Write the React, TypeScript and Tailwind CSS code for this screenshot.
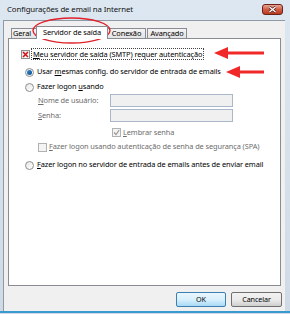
import React from "react";

const font = { fontFamily: '"Noto Sans", "Open Sans", sans-serif' };

function Radio({ checked }: { checked?: boolean }) {
  return (
    <span className="flex h-[9px] w-[9px] shrink-0 items-center justify-center rounded-full border border-[#8e8f8f] bg-gradient-to-br from-[#e6e6e6] to-[#ffffff]">
      {checked && <span className="h-[5px] w-[5px] rounded-full bg-gradient-to-br from-[#2f8ed8] to-[#0b4c8c]" />}
    </span>
  );
}

function Check({ state, disabled }: { state?: "x" | "v"; disabled?: boolean }) {
  return (
    <span
      className={`flex h-[9px] w-[9px] shrink-0 items-center justify-center border ${
        disabled ? "border-[#b1b1b1] bg-[#f4f4f4]" : "border-[#8e8f8f] bg-gradient-to-br from-[#e2e2e2] to-white"
      }`}
    >
      {state === "x" && (
        <svg width="7" height="7" viewBox="0 0 7 7">
          <path d="M1 1L6 6M6 1L1 6" stroke="#d4141b" strokeWidth="1.6" />
        </svg>
      )}
      {state === "v" && (
        <svg width="7" height="7" viewBox="0 0 7 7">
          <path d="M1 3.5L3 5.5L6.2 1" stroke="#9a9a9a" strokeWidth="1.2" fill="none" />
        </svg>
      )}
    </span>
  );
}

function Tab({ label, active, className }: { label: string; active?: boolean; className?: string }) {
  return (
    <div
      className={`flex items-center border border-b-0 border-[#898c95] ${
        active
          ? "relative z-10 -mb-px h-[13px] bg-white"
          : "h-[10px] bg-gradient-to-b from-[#f4f4f4] to-[#e3e3e3]"
      } ${className ?? ""}`}
    >
      <span className="whitespace-nowrap leading-none">{label}</span>
    </div>
  );
}

export default function App() {
  return (
    <div
      className="relative h-[314px] w-[290px] overflow-hidden bg-gradient-to-b from-[#dde7f1] to-[#cfdae6] text-[7.4px] tracking-[-0.1px] text-black"
      style={font}
    >
      {/* title bar */}
      <div className="flex h-[20px] items-center justify-between pl-[7px] pr-[7px]">
        <span className="whitespace-nowrap text-[7.8px] leading-none text-[#111]">
          Configurações de email na Internet
        </span>
        <div className="mb-[2px] flex h-[11px] w-[21px] items-center justify-center rounded-[3px] border border-[#6b2318] bg-gradient-to-b from-[#e6a595] via-[#d35b45] to-[#b83a22]">
          <svg width="9" height="7" viewBox="0 0 9 7">
            <path d="M1.5 1L7.5 6M7.5 1L1.5 6" stroke="#4a1a12" strokeWidth="2.6" />
            <path d="M1.5 1L7.5 6M7.5 1L1.5 6" stroke="#ffffff" strokeWidth="1.4" />
          </svg>
        </div>
      </div>

      {/* client area */}
      <div className="ml-[3px] mr-[5px] flex h-[291px] flex-col border-l border-t border-[#8f9aa6] bg-[#f0f0f0]">
        {/* tabs */}
        <div className="ml-[7px] mt-[5px] flex h-[12px] items-end">
          <Tab label="Geral" className="w-[26px] justify-start pl-px" />
          <Tab label="Servidor de saída" active className="-ml-px w-[72px] justify-center" />
          <Tab label="Conexão" className="-ml-px w-[39px] justify-center" />
          <Tab label="Avançado" className="ml-px w-[40px] justify-center" />
        </div>

        {/* panel */}
        <div className="ml-[4px] mr-[4px] h-[248px] whitespace-nowrap border border-[#898c95] bg-white">
          <div className="ml-[12px] mt-[8px] flex h-[14px] items-center gap-[1px]">
            <Check state="x" />
            <span className="border border-dotted border-[#444] px-px leading-[10px]">
              <u>M</u>eu servidor de saída (SMTP) requer autenticação
            </span>
          </div>

          <div className="ml-[16px] mt-[4px] flex h-[14px] items-center gap-[3px]">
            <Radio checked />
            <span>
              Usar <u>m</u>esmas config. do servidor de entrada de emails
            </span>
          </div>

          <div className="ml-[16px] mt-[1px] flex h-[14px] items-center gap-[3px]">
            <Radio />
            <span>
              Fazer logon <u>u</u>sando
            </span>
          </div>

          <div className="ml-[29px] flex h-[13px] items-center text-[#6d6d6d]">
            <span className="w-[72px]">
              <u>N</u>ome de usuário:
            </span>
            <div className="h-[13px] w-[123px] border border-[#a9b7c9] bg-[#f0f0f0]" />
          </div>

          <div className="ml-[29px] mt-[2px] flex h-[13px] items-center text-[#6d6d6d]">
            <span className="w-[72px]">
              <u>S</u>enha:
            </span>
            <div className="h-[13px] w-[123px] border border-[#a9b7c9] bg-[#f0f0f0]" />
          </div>

          <div className="ml-[103px] mt-[4px] flex h-[13px] items-center gap-[2px] text-[#6d6d6d]">
            <Check state="v" disabled />
            <span>
              <u>L</u>embrar senha
            </span>
          </div>

          <div className="ml-[29px] mt-px flex h-[14px] items-center gap-[2px] text-[#6d6d6d]">
            <Check disabled />
            <span>
              <u>F</u>azer logon usando autenticação de senha de segurança (SPA)
            </span>
          </div>

          <div className="ml-[16px] mt-[4px] flex h-[14px] items-center gap-[3px]">
            <Radio />
            <span>
              <u>F</u>azer logon no servidor de entrada de emails antes de enviar email
            </span>
          </div>
        </div>

        {/* buttons */}
        <div className="mr-[3px] mt-[6px] flex justify-end gap-[5px]">
          <button className="h-[15px] w-[50px] rounded-[2px] border border-[#3c7fb1] bg-gradient-to-b from-[#eaf6fd] via-[#d9f0fc] to-[#a7d9f5] text-[7.2px] leading-none">
            OK
          </button>
          <button className="h-[15px] w-[51px] rounded-[2px] border border-[#707070] bg-gradient-to-b from-[#f2f2f2] via-[#ebebeb] to-[#cfcfcf] text-[7.2px] leading-none">
            Cancelar
          </button>
        </div>
      </div>

      <div className="absolute bottom-[1px] left-0 h-[2px] w-full bg-[#3a9ad0]" />

      {/* annotations */}
      <svg className="pointer-events-none absolute left-0 top-0" width="290" height="314">
        <ellipse cx="71.5" cy="30.5" rx="38.5" ry="12.5" fill="none" stroke="#e0202a" strokeWidth="1.4" />
        <path d="M214 53L228 47L228 59Z" fill="#f02828" />
        <rect x="227" y="51.5" width="37" height="3" fill="#f02828" />
        <path d="M226 72L240 66L240 78Z" fill="#f02828" />
        <rect x="239" y="70.5" width="25" height="3" fill="#f02828" />
      </svg>
    </div>
  );
}
